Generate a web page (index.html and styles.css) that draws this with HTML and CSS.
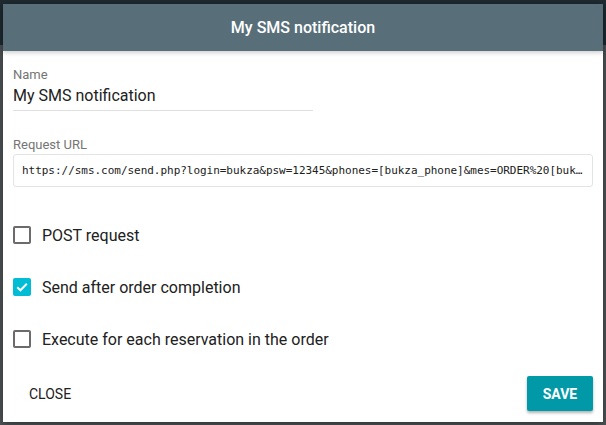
FILE: index.html
```html
<!DOCTYPE html>
<html>
<head>
<meta charset="utf-8">
<link rel="stylesheet" href="styles.css">
</head>
<body>
<div class="backdrop">
  <div class="dialog">
    <div class="dialog-header">My SMS notification</div>
    <div class="dialog-body">
      <div class="field name-field">
        <label class="field-label">Name</label>
        <div class="text-input">My SMS notification</div>
      </div>
      <div class="field url-field">
        <label class="field-label">Request URL</label>
        <div class="url-input">https://sms.com/send.php?login=bukza&amp;psw=12345&amp;phones=[bukza_phone]&amp;mes=ORDER%20[buk…</div>
      </div>
      <div class="checks">
        <div class="check-row">
          <span class="checkbox"></span>
          <span class="check-label">POST request</span>
        </div>
        <div class="check-row">
          <span class="checkbox checked">
            <svg viewBox="0 0 18 18" width="18" height="18"><path d="M4.2 9.2l3.2 3.1 6.4-6.6" fill="none" stroke="#fff" stroke-width="2"/></svg>
          </span>
          <span class="check-label">Send after order completion</span>
        </div>
        <div class="check-row">
          <span class="checkbox"></span>
          <span class="check-label">Execute for each reservation in the order</span>
        </div>
      </div>
    </div>
    <div class="dialog-footer">
      <button class="btn btn-text">CLOSE</button>
      <button class="btn btn-primary">SAVE</button>
    </div>
  </div>
</div>
</body>
</html>
```
FILE: styles.css
```css
html, body {
  margin: 0;
  padding: 0;
}
body {
  font-family: Roboto, "Liberation Sans", sans-serif;
  background: linear-gradient(to bottom, #1f2b31 0, #1f2b31 45px, #4e5356 45px, #4e5356 100%);
  width: 606px;
  height: 425px;
  overflow: hidden;
}
.backdrop {
  padding: 4px 3px 3px 3px;
}
.dialog {
  width: 600px;
  height: 418px;
  background: #fff;
  display: flex;
  flex-direction: column;
  box-shadow: 0 2px 8px rgba(0,0,0,0.4);
}
.dialog-header {
  height: 47px;
  background: #586f79;
  color: #fff;
  font-weight: 500;
  font-size: 16px;
  display: flex;
  align-items: center;
  justify-content: center;
  box-shadow: 0 2px 4px rgba(0,0,0,0.18);
  position: relative;
  z-index: 1;
}
.dialog-body {
  flex: 1;
  padding: 16px 10px 0 10px;
}
.field-label {
  display: block;
  font-size: 13px;
  color: #757575;
  line-height: 16px;
}
.name-field {
  width: 300px;
}
.text-input {
  font-size: 16px;
  color: #212121;
  line-height: 20px;
  padding: 3px 0 4px 0;
  border-bottom: 1px solid #e0e0e0;
}
.url-field {
  margin-top: 26px;
}
.url-input {
  margin-top: 1px;
  height: 31px;
  border: 1px solid #e4e4e4;
  border-radius: 3px;
  padding: 0 4px 0 8px;
  font-family: "DejaVu Sans Mono", monospace;
  font-size: 11px;
  letter-spacing: -0.03px;
  line-height: 31px;
  color: #212121;
  white-space: nowrap;
}
.checks {
  margin-top: 37px;
  display: flex;
  flex-direction: column;
  gap: 30px;
}
.check-row {
  display: flex;
  align-items: center;
  height: 22px;
}
.checkbox {
  width: 18px;
  height: 18px;
  box-sizing: border-box;
  border: 2px solid #6b6b6b;
  border-radius: 2px;
  margin-right: 11px;
  display: flex;
}
.checkbox.checked {
  border: none;
  background: #00bcd4;
}
.check-label {
  font-size: 16px;
  color: #212121;
}
.dialog-footer {
  display: flex;
  justify-content: space-between;
  align-items: center;
  padding: 0 10px 11px 10px;
}
.btn {
  font-family: Roboto, "Liberation Sans", sans-serif;
  font-size: 14px;
  border: none;
  border-radius: 2px;
  height: 35px;
  cursor: pointer;
}
.btn-text {
  background: transparent;
  color: #212121;
  padding: 0 16px;
  font-weight: 400;
}
.btn-primary {
  background: #0199a8;
  color: #fff;
  font-weight: 700;
  width: 66px;
  box-shadow: 0 2px 3px rgba(0,0,0,0.3);
}
```
